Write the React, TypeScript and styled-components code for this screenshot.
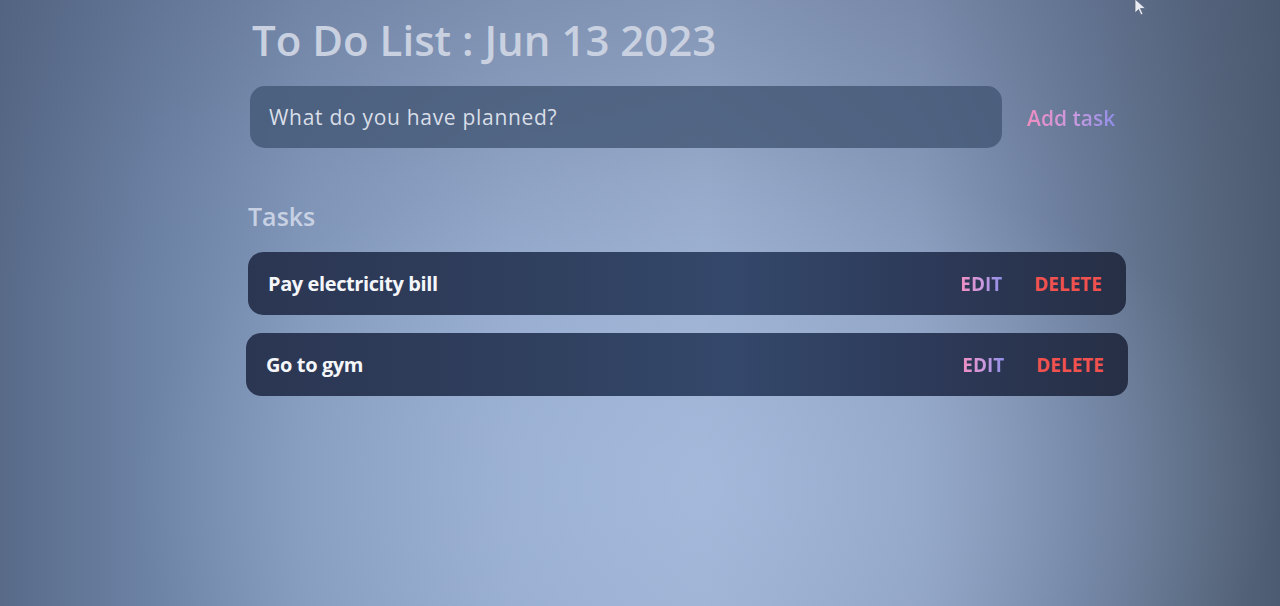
import React from "react";
import styled, { createGlobalStyle } from "styled-components";

const Global = createGlobalStyle`
  html, body { margin: 0; padding: 0; height: 100%; }
  body { font-family: "Open Sans", "Noto Sans", sans-serif; }
  #root { height: 100%; }
`;

const Screen = styled.div`
  position: relative;
  width: 1280px;
  height: 606px;
  overflow: hidden;
  background:
    linear-gradient(180deg, rgba(70,82,110,0.28) 0%, rgba(70,82,110,0.08) 30%, rgba(70,82,110,0) 50%),
    radial-gradient(ellipse 45% 55% at 55% 80%, rgba(170,192,226,0.55) 0%, rgba(170,192,226,0) 100%),
    linear-gradient(90deg, #586a88 0%, #6d83a6 12%, #8399bc 24%, #94a9cb 40%, #9cb0d1 55%, #8a9dbe 72%, #6d7f9e 84%, #58687f 94%, #4d5b72 100%);
`;

const Container = styled.main`
  width: 882px;
  margin-left: 248px;
  padding-top: 12px;
  display: flex;
  flex-direction: column;
`;

const Title = styled.h1`
  margin: 0 0 0 4px;
  font-size: 42px;
  line-height: 56px;
  font-weight: 600;
  color: #c9d1e1;
`;

const Form = styled.form`
  display: flex;
  align-items: center;
  gap: 25px;
  margin-top: 18px;
  margin-left: 2px;
`;

const Input = styled.input`
  width: 752px;
  height: 62px;
  box-sizing: border-box;
  border: none;
  border-radius: 15px;
  background: rgba(66, 86, 116, 0.8);
  padding: 0 19px;
  font-family: "Open Sans", sans-serif;
  font-size: 21px;
  letter-spacing: 0.7px;
  color: #e0e5ee;
  outline: none;
  &::placeholder { color: #d9dee8; }
`;

const GradientText = styled.span<{ $size: number; $weight: number }>`
  font-size: ${(p) => p.$size}px;
  font-weight: ${(p) => p.$weight};
  background: linear-gradient(90deg, #f08dc2 0%, #c89ae0 55%, #8f8ee6 100%);
  -webkit-background-clip: text;
  background-clip: text;
  color: transparent;
`;

const AddButton = styled.button`
  background: none;
  border: none;
  padding: 0;
  cursor: pointer;
  font-family: "Open Sans", sans-serif;
  margin-top: 2px;
`;

const SectionTitle = styled.h2`
  margin: 50px 0 0 0;
  font-size: 25px;
  line-height: 36px;
  font-weight: 600;
  color: #c7d1e3;
`;

const List = styled.ul`
  list-style: none;
  margin: 18px 0 0 0;
  padding: 0;
  display: flex;
  flex-direction: column;
  gap: 18px;
`;

const TaskRow = styled.li<{ $shift: number }>`
  display: flex;
  align-items: center;
  height: 63px;
  box-sizing: border-box;
  width: ${(p) => 878 + p.$shift * 2}px;
  margin-left: ${(p) => -p.$shift}px;
  padding: 0 24px 0 20px;
  border-radius: 15px;
  background: linear-gradient(90deg, #2b3652 0%, #30405f 35%, #34486b 55%, #2c3856 80%, #262f45 100%);
`;

const TaskText = styled.span`
  flex: 1;
  font-size: 20px;
  font-weight: 700;
  color: #f4f6fa;
  letter-spacing: -0.4px;
`;

const Actions = styled.div`
  display: flex;
  align-items: center;
  gap: 32px;
`;

const ActionButton = styled.button`
  background: none;
  border: none;
  padding: 0;
  cursor: pointer;
  font-family: "Open Sans", sans-serif;
`;

const DeleteText = styled.span`
  font-size: 19px;
  font-weight: 700;
  color: #f2524f;
`;

const Cursor = styled.svg`
  position: absolute;
  left: 1134px;
  top: -2px;
`;

const tasks = ["Pay electricity bill", "Go to gym"];

export default function App() {
  return (
    <>
      <Global />
      <Screen>
        <Container>
          <Title>To Do List : Jun 13 2023</Title>
          <Form onSubmit={(e) => e.preventDefault()}>
            <Input placeholder="What do you have planned?" />
            <AddButton type="submit">
              <GradientText $size={21} $weight={600}>Add task</GradientText>
            </AddButton>
          </Form>
          <SectionTitle>Tasks</SectionTitle>
          <List>
            {tasks.map((t, i) => (
              <TaskRow key={t} $shift={i * 2}>
                <TaskText>{t}</TaskText>
                <Actions>
                  <ActionButton>
                    <GradientText $size={19} $weight={700}>EDIT</GradientText>
                  </ActionButton>
                  <ActionButton>
                    <DeleteText>DELETE</DeleteText>
                  </ActionButton>
                </Actions>
              </TaskRow>
            ))}
          </List>
        </Container>
        <Cursor width="16" height="20" viewBox="0 0 16 20">
          <path d="M1 1 L1 15 L4.5 11.5 L7 17 L9 16 L6.5 10.5 L11.5 10.5 Z" fill="#e8ecf2" stroke="#5a6780" strokeWidth="0.8" />
        </Cursor>
      </Screen>
    </>
  );
}
